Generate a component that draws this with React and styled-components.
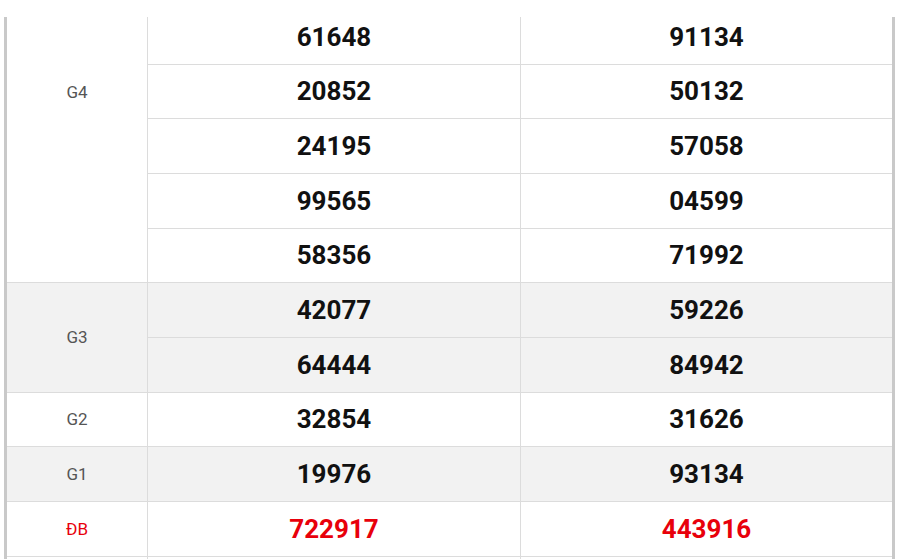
import React from 'react'
import styled, { createGlobalStyle } from 'styled-components'

const GlobalStyle = createGlobalStyle`
    html, body {
        margin: 0;
        padding: 0;
        background: #fff;
        font-family: Roboto, 'Liberation Sans', sans-serif;
    }
`

const Viewport = styled.div`
    width: 900px;
    height: 559px;
    padding-top: 17px;
    box-sizing: border-box;
    overflow: hidden;
    background: #fff;
`

const ResultTable = styled.table`
    width: 891px;
    margin-left: 4px;
    border-collapse: collapse;
    table-layout: fixed;
    border-left: 3px solid #c9c9c9;
    border-right: 3px solid #c9c9c9;
`

/* the first visible row is partly scrolled under the page top */
const Row = styled.tr`
    height: ${props => (props.cut ? '47px' : '54.68px')};
    background: ${props => (props.shaded ? '#f2f2f2' : '#fff')};
`

const LabelCell = styled.td`
    text-align: center;
    vertical-align: ${props => (props.offset ? 'top' : 'middle')};
    padding: ${props => (props.offset ? `${props.offset}px 0 0` : '0')};
    font-size: 17px;
    color: ${props => (props.special ? '#e8000b' : '#555')};
    border: 1px solid #dcdcdc;
    border-top: ${props => (props.offset ? 'none' : '1px solid #dcdcdc')};
    border-left: 3px solid #c9c9c9;
`

const NumberCell = styled.td`
    text-align: center;
    vertical-align: middle;
    font-size: 26px;
    font-weight: 700;
    color: ${props => (props.special ? '#e8000b' : '#111')};
    border: 1px solid #dcdcdc;
    border-top: ${props => (props.cut ? 'none' : '1px solid #dcdcdc')};
    padding: ${props => (props.cut ? '0 0 7px' : '0')};
`

const prizes = [
    {
        label: 'G4',
        cut: true,
        labelOffset: 65,
        rows: [
            ['61648', '91134'],
            ['20852', '50132'],
            ['24195', '57058'],
            ['99565', '04599'],
            ['58356', '71992'],
        ],
    },
    {
        label: 'G3',
        shaded: true,
        rows: [
            ['42077', '59226'],
            ['64444', '84942'],
        ],
    },
    { label: 'G2', rows: [['32854', '31626']] },
    { label: 'G1', shaded: true, rows: [['19976', '93134']] },
    { label: 'ĐB', special: true, rows: [['722917', '443916']] },
]

const PrizeGroup = ({ prize }) =>
    prize.rows.map((pair, i) => {
        const cut = prize.cut && i === 0
        return (
            <Row key={i} shaded={prize.shaded} cut={cut}>
                {i === 0 && (
                    <LabelCell
                        rowSpan={prize.rows.length}
                        special={prize.special}
                        offset={prize.labelOffset}
                    >
                        {prize.label}
                    </LabelCell>
                )}
                {pair.map((num, j) => (
                    <NumberCell key={j} special={prize.special} cut={cut}>
                        {num}
                    </NumberCell>
                ))}
            </Row>
        )
    })

export default function App() {
    return (
        <Viewport>
            <GlobalStyle />
            <ResultTable>
                <colgroup>
                    <col style={{ width: 142 }} />
                    <col />
                    <col />
                </colgroup>
                <tbody>
                    {prizes.map(prize => (
                        <PrizeGroup key={prize.label} prize={prize} />
                    ))}
                    <Row>
                        <LabelCell />
                        <NumberCell />
                        <NumberCell />
                    </Row>
                </tbody>
            </ResultTable>
        </Viewport>
    )
}
